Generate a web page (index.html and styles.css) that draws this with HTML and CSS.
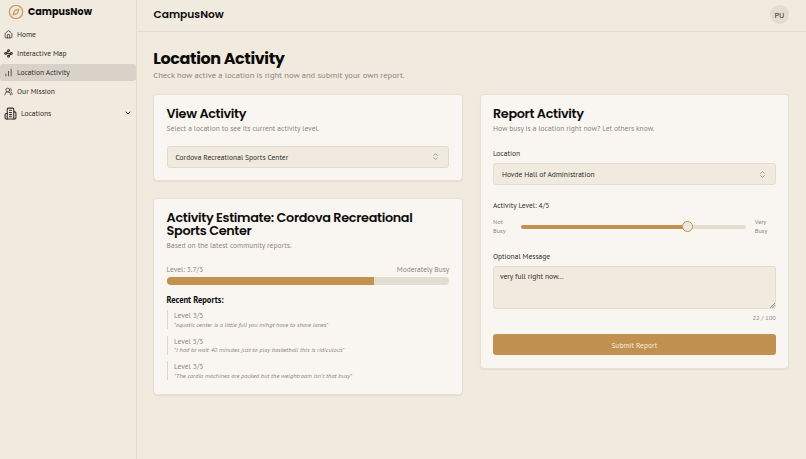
FILE: index.html
```html
<!DOCTYPE html>
<html lang="en">
<head>
  <meta charset="UTF-8">
  <title>CampusNow - Location Activity</title>
  <link rel="stylesheet" href="styles.css">
</head>
<body>
  <aside class="sidebar">
    <div class="brand">
      <svg class="brand-icon" viewBox="0 0 24 24"><circle cx="12" cy="12" r="10"/><path d="m16.24 7.76-1.804 5.411a2 2 0 0 1-1.265 1.265L7.76 16.24l1.804-5.411a2 2 0 0 1 1.265-1.265z"/></svg>
      <span>CampusNow</span>
    </div>
    <nav class="nav">
      <a class="nav-item">
        <svg class="icon" viewBox="0 0 24 24"><path d="M15 21v-8a1 1 0 0 0-1-1h-4a1 1 0 0 0-1 1v8"/><path d="M3 10a2 2 0 0 1 .709-1.528l7-5.999a2 2 0 0 1 2.582 0l7 5.999A2 2 0 0 1 21 10v9a2 2 0 0 1-2 2H5a2 2 0 0 1-2-2z"/></svg>
        <span>Home</span>
      </a>
      <a class="nav-item">
        <svg class="icon map-icon" viewBox="0 0 24 24"><circle cx="12" cy="4.500" r="2.500"/><path d="m10.200 6.300-3.900 3.900"/><circle cx="4.500" cy="12" r="2.500"/><path d="M7 12h10"/><circle cx="19.500" cy="12" r="2.500"/><path d="m13.800 17.700 3.900-3.900"/><circle cx="12" cy="19.500" r="2.500"/></svg>
        <span>Interactive Map</span>
      </a>
      <a class="nav-item active">
        <svg class="icon" viewBox="0 0 24 24"><path d="M5 21v-5M12 21V9M19 21V3"/></svg>
        <span>Location Activity</span>
      </a>
      <a class="nav-item">
        <svg class="icon" viewBox="0 0 24 24"><path d="M18 21a8 8 0 0 0-16 0"/><circle cx="10" cy="8" r="5"/><path d="M22 20c0-3.37-2-6.5-4-8a5 5 0 0 0-.45-8.3"/></svg>
        <span>Our Mission</span>
      </a>
      <a class="nav-item group">
        <svg class="icon" viewBox="0 0 24 24"><path d="M6 22V4a2 2 0 0 1 2-2h8a2 2 0 0 1 2 2v18Z"/><path d="M6 12H4a2 2 0 0 0-2 2v6a2 2 0 0 0 2 2h2M18 9h2a2 2 0 0 1 2 2v9a2 2 0 0 1-2 2h-2M10 6h4M10 10h4M10 14h4M10 18h4"/></svg>
        <span>Locations</span>
        <svg class="chevron" viewBox="0 0 24 24"><path d="m6 9 6 6 6-6"/></svg>
      </a>
    </nav>
  </aside>

  <div class="page">
    <header class="topbar">
      <span class="topbar-title">CampusNow</span>
      <div class="avatar">PU</div>
    </header>

    <main class="content">
      <h1>Location Activity</h1>
      <p class="lead">Check how active a location is right now and submit your own report.</p>

      <div class="columns">
        <div class="column">
          <section class="card view-card">
            <h2>View Activity</h2>
            <p class="description">Select a location to see its current activity level.</p>
            <div class="select">
              <span>Cordova Recreational Sports Center</span>
              <svg class="sort" viewBox="0 0 24 24"><path d="m7 15 5 5 5-5M7 9l5-5 5 5"/></svg>
            </div>
          </section>

          <section class="card estimate-card">
            <h2>Activity Estimate: Cordova Recreational Sports Center</h2>
            <p class="description">Based on the latest community reports.</p>
            <div class="level-row">
              <span>Level: 3.7/5</span>
              <span>Moderately Busy</span>
            </div>
            <div class="progress"><div class="progress-fill" style="width: 73.4%"></div></div>
            <h3>Recent Reports:</h3>
            <div class="reports">
              <div class="report">
                <p class="report-level">Level 3/5</p>
                <p class="quote">"aquatic center is a little full you mihgt have to share lanes"</p>
              </div>
              <div class="report">
                <p class="report-level">Level 5/5</p>
                <p class="quote">"I had to wait 40 minutes just to play basketball this is ridiculous"</p>
              </div>
              <div class="report">
                <p class="report-level">Level 3/5</p>
                <p class="quote">"The cardio machines are packed but the weightroom isn't that busy"</p>
              </div>
            </div>
          </section>
        </div>

        <section class="card report-card">
          <h2>Report Activity</h2>
          <p class="description">How busy is a location right now? Let others know.</p>
          <div class="label location-label">Location</div>
          <div class="select">
            <span>Hovde Hall of Administration</span>
            <svg class="sort" viewBox="0 0 24 24"><path d="m7 15 5 5 5-5M7 9l5-5 5 5"/></svg>
          </div>
          <div class="label level-label">Activity Level: 4/5</div>
          <div class="slider-row">
            <span class="slider-end">Not<br>Busy</span>
            <div class="slider">
              <div class="slider-fill" style="width: 73.8%"></div>
              <div class="slider-thumb" style="left: 73.8%"></div>
            </div>
            <span class="slider-end">Very<br>Busy</span>
          </div>
          <div class="label message-label">Optional Message</div>
          <div class="message">
            <span>very full right now...</span>
            <svg class="grip" viewBox="0 0 6 6"><path d="M0.5 5.5l5-5M3 5.5l2.500-2.500"/></svg>
          </div>
          <div class="count">22 / 100</div>
          <button class="submit">Submit Report</button>
        </section>
      </div>
    </main>
  </div>
</body>
</html>
```
FILE: styles.css
```css
* {
  box-sizing: border-box;
}

body {
  margin: 0;
  height: 459px;
  display: flex;
  overflow: hidden;
  background: #f1eadf;
  color: #302d29;
  font-family: "PT Sans", "Noto Sans", sans-serif;
  font-size: 7.47px;
}

h1, h2, h3, p {
  margin: 0;
}

svg {
  fill: none;
  stroke: currentColor;
  stroke-width: 2;
  stroke-linecap: round;
  stroke-linejoin: round;
  flex-shrink: 0;
}

h1, h2, .brand, .topbar-title {
  font-family: Poppins, Inter, sans-serif;
  color: #0c0b0a;
}

.sidebar {
  width: 137px;
  flex-shrink: 0;
  border-right: 1px solid #e3dccf;
}

.brand {
  height: 24px;
  padding-left: 8px;
  display: flex;
  align-items: center;
  gap: 4px;
  font-size: 9.6px;
  font-weight: 700;
}

.brand-icon {
  width: 16px;
  height: 16px;
  color: #c8a066;
}

.nav-item {
  height: 17px;
  margin-bottom: 2.15px;
  padding: 0 4px;
  display: flex;
  align-items: center;
  gap: 4px;
  border-radius: 3px;
}

.nav {
  padding-top: 1.5px;
}

.icon {
  width: 9px;
  height: 9px;
}

.map-icon {
  stroke-width: 2.8;
}

.active {
  background: #d9d2c8;
}

.group {
  height: 22px;
}

.group .icon {
  width: 13px;
  height: 13px;
}

.chevron {
  width: 8px;
  height: 8px;
  margin-left: auto;
  margin-right: 0.5px;
  stroke-width: 3;
}

.page {
  flex: 1;
}

.topbar {
  height: 32px;
  padding: 0 17px 2px 16.5px;
  border-bottom: 1px solid #e3dccf;
  display: flex;
  align-items: center;
  justify-content: space-between;
}

.topbar-title {
  font-size: 10.67px;
  font-weight: 600;
}

.avatar {
  width: 19px;
  height: 19px;
  border-radius: 50%;
  background: #e3dcd1;
  display: flex;
  align-items: center;
  justify-content: center;
  font-size: 8.2px;
}

.content {
  padding: 17px 17px 0 16.3px;
}

h1 {
  font-size: 16px;
  line-height: 20px;
  font-weight: 700;
  letter-spacing: -0.4px;
}

.lead {
  font-size: 8.53px;
  line-height: 12px;
  color: #8c867e;
}

.columns {
  margin-top: 13px;
  display: grid;
  grid-template-columns: 1fr 1fr;
  gap: 17px;
  align-items: start;
}

.column {
  display: grid;
  gap: 17px;
}

.card {
  padding: 12px 12.3px;
  background: #f9f6f1;
  border: 1px solid #e7e0d4;
  border-radius: 4px;
  box-shadow: 0 1px 1px rgba(90, 70, 40, 0.08);
}

.view-card {
  height: 87px;
}

.estimate-card {
  height: 196.5px;
}

.report-card {
  height: 275px;
}

h2 {
  font-size: 12.8px;
  line-height: 13px;
  font-weight: 600;
  letter-spacing: -0.32px;
}

.description {
  margin-top: 3px;
  line-height: 11px;
  color: #8c867e;
}

.select {
  height: 21.5px;
  padding: 0 8px;
  display: flex;
  align-items: center;
  justify-content: space-between;
  background: #f1eadf;
  border: 1px solid #e3dccf;
  border-radius: 3px;
}

.view-card .select {
  margin-top: 12px;
}

.sort {
  width: 9px;
  height: 9px;
  color: #8c867e;
}

.level-row {
  margin-top: 12.5px;
  display: flex;
  justify-content: space-between;
  line-height: 11px;
  color: #8c867e;
}

.progress {
  height: 8.5px;
  margin-top: 2px;
  border-radius: 5px;
  background: #e3dcd1;
  overflow: hidden;
}

.progress-fill {
  height: 100%;
  background: #c1914f;
}

h3 {
  margin-top: 9px;
  font-size: 8.53px;
  line-height: 12px;
  color: #0c0b0a;
}

.reports {
  margin-top: 4px;
  display: grid;
  gap: 6.5px;
}

.report {
  height: 19px;
  padding-left: 6.5px;
  border-left: 1px solid #dcd5ca;
  color: #8c867e;
}

.report-level {
  line-height: 10.5px;
}

.quote {
  font-size: 6.4px;
  line-height: 8.5px;
  font-style: italic;
}

.label {
  line-height: 10px;
}

.location-label {
  margin-top: 14.3px;
  margin-bottom: 5px;
}

.level-label {
  margin-top: 15px;
}

.slider-row {
  margin-top: 8px;
  height: 18px;
  display: flex;
  align-items: center;
  justify-content: space-between;
}

.slider-end {
  width: 21px;
  font-size: 6.4px;
  line-height: 8.5px;
  color: #8c867e;
}

.slider {
  position: relative;
  width: 225px;
  height: 4px;
  margin-right: 1px;
  border-radius: 2px;
  background: #e3dcd1;
}

.slider-fill {
  height: 100%;
  border-radius: 2px;
  background: #c1914f;
}

.slider-thumb {
  position: absolute;
  top: -3.5px;
  width: 11px;
  height: 11px;
  margin-left: -5px;
  border: 1px solid #c1914f;
  border-radius: 50%;
  background: #f1eadf;
}

.message-label {
  margin-top: 15px;
}

.message {
  position: relative;
  height: 43px;
  margin-top: 5px;
  padding: 4px 6px;
  background: #f1eadf;
  border: 1px solid #e3dccf;
  border-radius: 3px;
}

.grip {
  position: absolute;
  right: 0;
  bottom: 0;
  width: 5px;
  height: 5px;
  stroke-width: 1;
  color: #77716a;
}

.count {
  margin-top: 4px;
  font-size: 6.4px;
  line-height: 9px;
  text-align: right;
  color: #8c867e;
}

.submit {
  width: 100%;
  height: 21.5px;
  margin-top: 12px;
  border: none;
  border-radius: 3px;
  background: #c1914f;
  color: #f6eddf;
  font-family: inherit;
  font-size: 7.47px;
}
```
